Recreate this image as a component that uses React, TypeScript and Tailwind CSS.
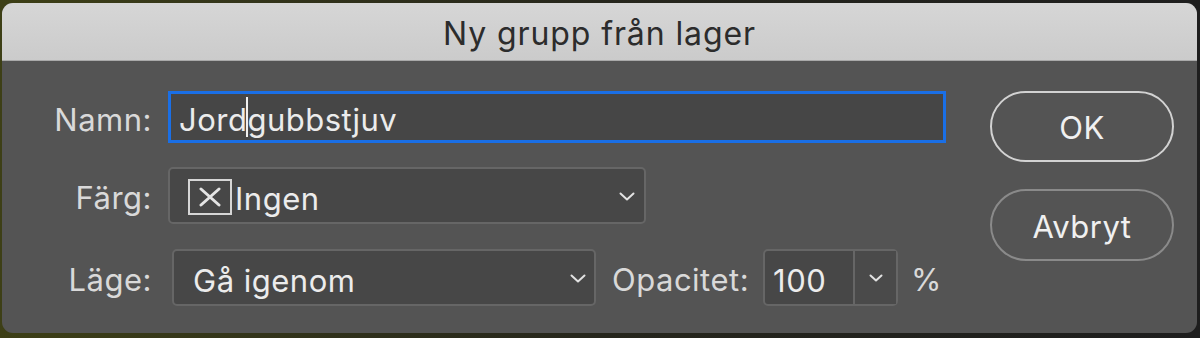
import React from "react";

const Chevron = ({ w = 16, h = 9 }: { w?: number; h?: number }) => (
  <svg width={w} height={h} viewBox={`0 0 ${w} ${h}`} className="mt-[2px]">
    <path
      d={`M1.5 1.5 L${w / 2} ${h - 1.5} L${w - 1.5} 1.5`}
      fill="none"
      stroke="#e2e2e2"
      strokeWidth="2"
      strokeLinecap="round"
      strokeLinejoin="round"
    />
  </svg>
);

export default function App() {
  return (
    <div
      className="w-[1200px] h-[338px] overflow-hidden bg-gradient-to-r from-[#3d3f16] via-[#26261c] to-[#1e1e1e] pt-[3px] pl-[2px] pr-[3px]"
      style={{ fontFamily: "Inter, 'Noto Sans', sans-serif" }}
    >
      <div className="h-[330px] rounded-[11px] overflow-hidden bg-[#545454] flex flex-col">
        <div className="h-[58px] shrink-0 bg-gradient-to-b from-[#d6d6d6] to-[#cbcbcb] border-b border-[#a9a9a9] flex items-center justify-center">
          <span className="text-[32px] text-[#2c2c2c] tracking-[0.9px] leading-none mt-[4px]">Ny grupp från lager</span>
        </div>
        <div className="flex flex-1 pt-[30px]">
          {/* form */}
          <div className="flex flex-col">
            {/* Namn */}
            <div className="flex items-center">
              <div className="w-[151px] text-right text-[31px] tracking-[0.5px] text-[#d9d9d9] pr-[1px] pt-[6px]">Namn:</div>
              <div className="ml-[15px] w-[778px] h-[52px] border-[3px] border-[#1a6fe6] bg-[#464646] flex items-center pl-[8px]">
                <span className="text-[31px] tracking-[0.5px] text-[#ececec] leading-none pt-[5px]">Jord</span>
                <span className="w-[2px] h-[40px] bg-[#f0f0f0] mx-[-1px]" />
                <span className="text-[31px] tracking-[0.5px] text-[#ececec] leading-none pt-[5px]">gubbstjuv</span>
              </div>
              <div className="w-[44px]" />
            </div>
            {/* Färg */}
            <div className="flex items-center mt-[23px]">
              <div className="w-[151px] text-right text-[31px] tracking-[0.5px] text-[#d9d9d9] pr-[1px] pt-[6px]">Färg:</div>
              <div className="ml-[15px] w-[478px] h-[57px] rounded-[5px] border-2 border-[#666666] bg-[#474747] flex items-center pl-[18px] pr-[9px]">
                <div className="w-[44px] h-[36px] border-2 border-[#d6d6d6] flex items-center justify-center mt-[4px]">
                  <svg width="24" height="20" viewBox="0 0 24 20">
                    <path d="M3 2 L21 18 M21 2 L3 18" stroke="#e4e4e4" strokeWidth="3" strokeLinecap="round" />
                  </svg>
                </div>
                <span className="ml-[3px] text-[31px] tracking-[0.5px] text-[#ececec] leading-none pt-[6px]">Ingen</span>
                <div className="flex-1" />
                <Chevron />
              </div>
            </div>
            {/* Läge */}
            <div className="flex items-center mt-[25px]">
              <div className="w-[151px] text-right text-[31px] tracking-[0.5px] text-[#d9d9d9] pr-[1px] pt-[6px]">Läge:</div>
              <div className="ml-[19px] w-[424px] h-[57px] rounded-[5px] border-2 border-[#666666] bg-[#474747] flex items-center pl-[19px] pr-[8px]">
                <span className="text-[31px] tracking-[0.5px] text-[#ececec] leading-none pt-[6px]">Gå igenom</span>
                <div className="flex-1" />
                <Chevron />
              </div>
              <div className="ml-[16px] text-[31px] tracking-[0.5px] text-[#d9d9d9] pt-[6px]">Opacitet:</div>
              <div className="ml-[14px] w-[135px] h-[57px] rounded-[5px] border-2 border-[#666666] bg-[#474747] flex">
                <div className="w-[90px] h-full flex items-center pl-[8px] border-r-2 border-[#666666]">
                  <span className="text-[31px] tracking-[0.5px] text-[#ececec] leading-none pt-[6px]">100</span>
                </div>
                <div className="flex-1 flex items-center justify-center bg-[#4a4a4a]">
                  <Chevron w={14} h={8} />
                </div>
              </div>
              <div className="ml-[13px] text-[31px] text-[#d9d9d9] pt-[6px]">%</div>
            </div>
          </div>
          {/* buttons */}
          <div className="flex flex-col">
            <div className="w-[184px] h-[71px] rounded-full border-2 border-[#d2d2d2] flex items-center justify-center text-[31px] tracking-[0.5px] text-[#f0f0f0]">
              <span className="pt-[4px]">OK</span>
            </div>
            <div className="mt-[27px] w-[184px] h-[72px] rounded-full border-2 border-[#8a8a8a] flex items-center justify-center text-[31px] tracking-[0.5px] text-[#f0f0f0]">
              <span className="pt-[4px]">Avbryt</span>
            </div>
          </div>
        </div>
      </div>
    </div>
  );
}
